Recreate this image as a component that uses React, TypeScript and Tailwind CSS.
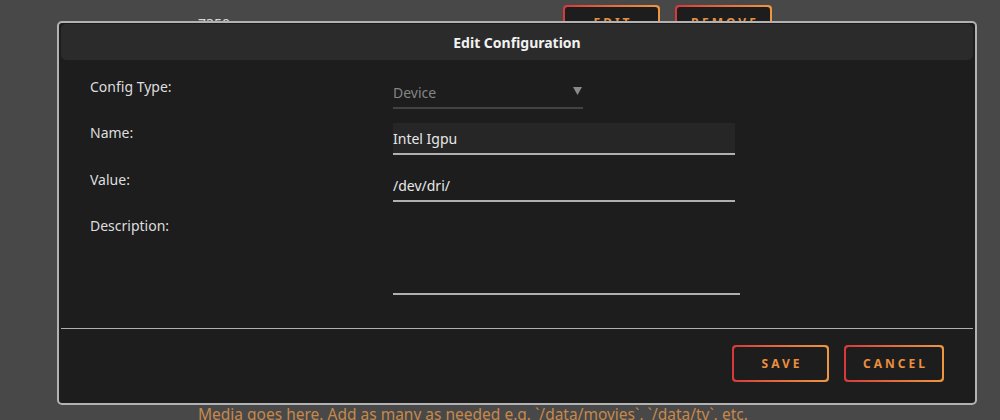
import React from "react";

function GradBtn({ label, w, h, className = "" }: { label: string; w: string; h: string; className?: string }) {
  return (
    <div className={`rounded-[4px] bg-gradient-to-r from-[#d7383a] to-[#ee9740] p-[2px] ${w} ${h} ${className}`}>
      <div className="flex h-full w-full items-center justify-center rounded-[3px] bg-[#1d1d1d]">
        <span className="pl-[3px] text-[12px] font-bold tracking-[3px] text-[#eb8f3e]">{label}</span>
      </div>
    </div>
  );
}

export default function App() {
  return (
    <div
      className="relative h-[420px] w-[1000px] overflow-hidden bg-[#484848]"
      style={{ fontFamily: '"Noto Sans", "Open Sans", sans-serif' }}
    >
      {/* background page content */}
      <div className="flex h-full flex-col justify-between pl-[198px]">
        <div className="flex items-start pt-[5px]">
          <div className="w-[365px] pt-[8px] text-[14px] text-[#d8d8d8]">7350</div>
          <GradBtn label="EDIT" w="w-[97px]" h="h-[36px]" />
          <GradBtn label="REMOVE" w="w-[97px]" h="h-[36px]" className="ml-[15px]" />
        </div>
        <div className="-mb-[5px] whitespace-nowrap text-[15.5px] leading-[22px] text-[#c6884c]">
          Media goes here. Add as many as needed e.g. `/data/movies`, `/data/tv`, etc.
        </div>
      </div>

      {/* modal overlay */}
      <div className="absolute left-[57px] top-[21px] flex h-[384px] w-[920px] flex-col rounded-[5px] border-2 border-[#b2b2b2] bg-[#1d1d1d] px-[2px] pt-[1px]">
        <div className="flex h-[36px] items-center justify-center rounded-[5px] bg-[#2b2b2b] text-[14px] font-bold text-[#f2f2f2]">
          Edit Configuration
        </div>

        <div className="flex flex-col pl-[29px] text-[14px] leading-[20px] text-[#dedede]">
          {/* Config type */}
          <div className="mt-[17px] flex items-start">
            <div className="w-[303px]">Config Type:</div>
            <div className="flex h-[32px] w-[190px] items-start justify-between border-b-2 border-[#434343] pt-[6px]">
              <span className="text-[#858585]">Device</span>
              <svg width="9" height="8" viewBox="0 0 9 8" className="mr-[1px] mt-[4px]">
                <polygon points="0,0 9,0 4.5,8" fill="#8a8a8a" />
              </svg>
            </div>
          </div>

          {/* Name */}
          <div className="mt-[14px] flex items-start">
            <div className="w-[303px]">Name:</div>
            <div className="flex h-[32px] w-[342px] items-center border-b-2 border-[#b0b0b0] bg-[#262626] pt-[2px] text-[#e8e8e8]">
              Intel Igpu
            </div>
          </div>

          {/* Value */}
          <div className="mt-[15px] flex items-start">
            <div className="w-[303px]">Value:</div>
            <div className="flex h-[32px] w-[342px] items-center border-b-2 border-[#b0b0b0] pt-[2px] text-[#e8e8e8]">
              /dev/dri/
            </div>
          </div>

          {/* Description */}
          <div className="mt-[14px] flex items-start">
            <div className="w-[303px]">Description:</div>
            <div className="h-[79px] w-[347px] border-b-2 border-[#b0b0b0]" />
          </div>
        </div>

        <div className="mt-[33px] h-[1px] bg-[#b0b0b0]" />

        <div className="flex justify-end gap-[15px] pr-[29px] pt-[16px]">
          <GradBtn label="SAVE" w="w-[97px]" h="h-[37px]" />
          <GradBtn label="CANCEL" w="w-[100px]" h="h-[37px]" />
        </div>
      </div>
    </div>
  );
}
